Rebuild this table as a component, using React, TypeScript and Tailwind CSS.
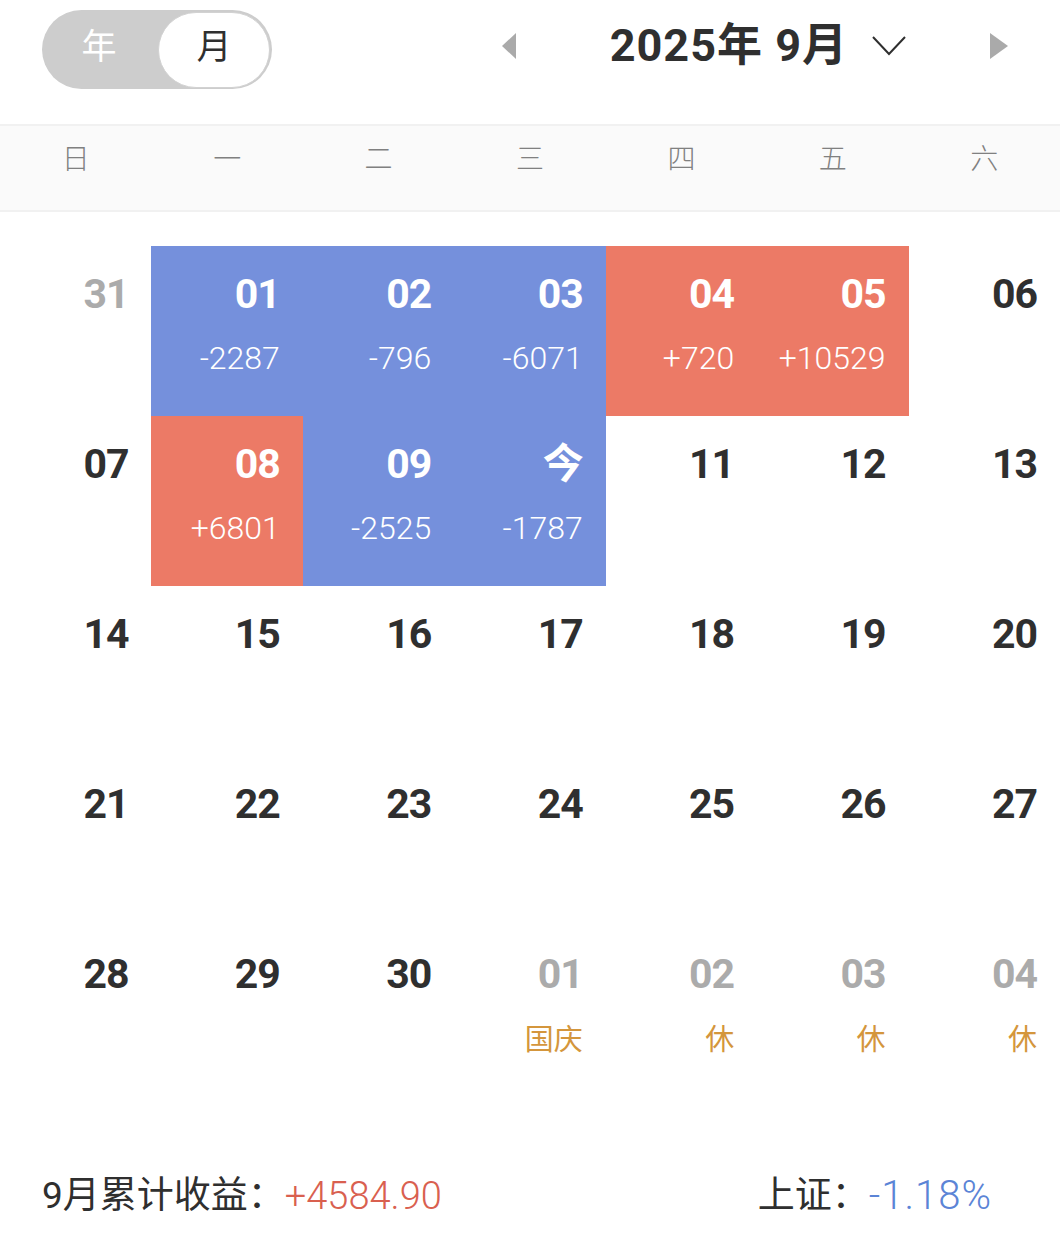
import React from 'react';

type Cell = {
  day: string;
  value?: string;
  tone?: 'up' | 'down';
  muted?: boolean;
  label?: string;
};

const weekdays = ['日', '一', '二', '三', '四', '五', '六'];

const rows: Cell[][] = [
  [
    { day: '31', muted: true },
    { day: '01', value: '-2287', tone: 'down' },
    { day: '02', value: '-796', tone: 'down' },
    { day: '03', value: '-6071', tone: 'down' },
    { day: '04', value: '+720', tone: 'up' },
    { day: '05', value: '+10529', tone: 'up' },
    { day: '06' },
  ],
  [
    { day: '07' },
    { day: '08', value: '+6801', tone: 'up' },
    { day: '09', value: '-2525', tone: 'down' },
    { day: '今', value: '-1787', tone: 'down' },
    { day: '11' },
    { day: '12' },
    { day: '13' },
  ],
  [
    { day: '14' }, { day: '15' }, { day: '16' }, { day: '17' }, { day: '18' }, { day: '19' }, { day: '20' },
  ],
  [
    { day: '21' }, { day: '22' }, { day: '23' }, { day: '24' }, { day: '25' }, { day: '26' }, { day: '27' },
  ],
  [
    { day: '28' },
    { day: '29' },
    { day: '30' },
    { day: '01', muted: true, label: '国庆' },
    { day: '02', muted: true, label: '休' },
    { day: '03', muted: true, label: '休' },
    { day: '04', muted: true, label: '休' },
  ],
];

const font = "font-['Roboto','Noto_Sans_CJK_SC',sans-serif]";

const DayCell: React.FC<{ cell: Cell }> = ({ cell }) => {
  const bg =
    cell.tone === 'up' ? 'bg-[#ec7a66]' : cell.tone === 'down' ? 'bg-[#7590dc]' : 'bg-white';
  const dayColor = cell.tone ? 'text-white' : cell.muted ? 'text-[#ababab]' : 'text-[#2f2f2f]';
  return (
    <div className={`h-[170px] flex flex-col items-end pr-[23px] pt-[27px] ${bg}`}>
      <span className={`h-[42px] leading-[42px] text-[41px] font-bold tracking-[-1px] ${dayColor}`}>
        {cell.day}
      </span>
      {cell.value && (
        <span className="mt-[25px] h-[36px] leading-[36px] text-[32px] font-light text-white tracking-[0px]">
          {cell.value}
        </span>
      )}
      {cell.label && (
        <span className="mt-[29px] h-[32px] leading-[32px] text-[29px] text-[#d4963c]">
          {cell.label}
        </span>
      )}
    </div>
  );
};

export default function App() {
  return (
    <div className={`w-[1060px] h-[1241px] bg-white ${font}`}>
      {/* header */}
      <div className="h-[124px] flex items-start pt-[10px] pl-[42px] pr-[52px]">
        <div className="w-[230px] h-[79px] rounded-full bg-[#cdcdcd] flex items-center p-[2px]">
          <div className="flex-1 flex items-center justify-center text-[35px] text-white pr-[4px] -mt-[2px]">年</div>
          <div className="w-[112px] h-[76px] rounded-full bg-white border border-[#d2d2d2] flex items-center justify-center text-[35px] text-[#2f2f2f]">
            <span className="-mt-[2px]">月</span>
          </div>
        </div>
        <div className="flex-1 h-[76px] flex items-center justify-end -mt-[2px]">
          <svg width="14" height="26" viewBox="0 0 14 26" className="mr-[94px]">
            <path d="M14 0 L0 13 L14 26 Z" fill="#aaaaaa" />
          </svg>
          <span className="text-[45px] leading-[50px] font-bold text-[#2f2f2f] tracking-[1px]">2025年 9月</span>
          <svg width="34" height="20" viewBox="0 0 34 20" className="ml-[24px] mr-[84px]">
            <path d="M1 1 L17 18 L33 1" fill="none" stroke="#2f2f2f" strokeWidth="2" />
          </svg>
          <svg width="18" height="26" viewBox="0 0 18 26">
            <path d="M0 0 L18 13 L0 26 Z" fill="#aaaaaa" />
          </svg>
        </div>
      </div>

      {/* weekdays */}
      <div className="grid grid-cols-7 h-[88px] bg-[#fafafa] border-y-2 border-[#f1f1f1]">
        {weekdays.map((w) => (
          <div key={w} className="flex items-center justify-center text-[28px] text-[#808080] font-light pb-[16px]">
            {w}
          </div>
        ))}
      </div>

      {/* grid */}
      <div className="mt-[34px] grid grid-cols-7">
        {rows.flat().map((c, i) => (
          <DayCell key={i} cell={c} />
        ))}
      </div>

      {/* footer */}
      <div className="mt-[70px] flex items-center justify-between pl-[42px] pr-[68px] text-[37px]">
        <div className="flex items-center">
          <span className="text-[#2f2f2f]">9月累计收益：</span>
          <span className="text-[#d9604f] font-light text-[38px]">+4584.90</span>
        </div>
        <div className="flex items-center">
          <span className="text-[#2f2f2f]">上证：</span>
          <span className="text-[#5b84d6] font-light text-[40px] tracking-[1px]">-1.18%</span>
        </div>
      </div>
    </div>
  );
}
